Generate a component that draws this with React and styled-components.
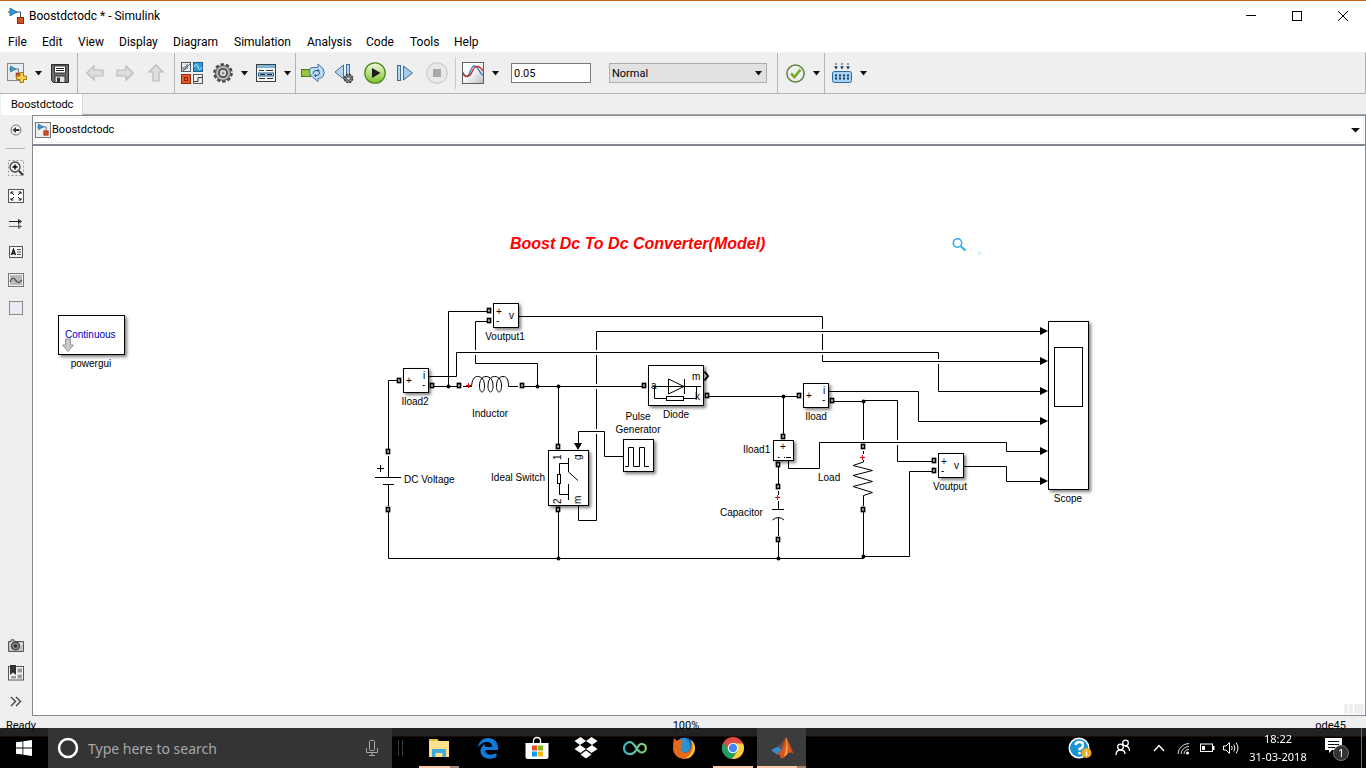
import React from "react";
import styled, { createGlobalStyle, css } from "styled-components";

const windowFont = `Roboto, "Noto Sans", sans-serif`;
const taskbarFont = `"Noto Sans", "Open Sans", sans-serif`;
const modelFont = `"Liberation Sans", Arial, sans-serif`;

const GlobalStyle = createGlobalStyle`
  * { box-sizing: border-box; }
  body { margin: 0; background: #000; font-family: ${windowFont}; font-size: 12px; color: #000; }
  button, input, select { font: inherit; color: inherit; }
  button { border: 0; padding: 0; background: none; }
  svg { display: block; }
`;

/* ---------- window frame ---------- */

const Desktop = styled.div`
  min-height: 100vh;
  display: flex;
  flex-direction: column;
  padding-bottom: 31px;
`;

const Window = styled.main`
  flex: 1;
  display: flex;
  flex-direction: column;
  background: #efefef;
  border-top: 1px solid #c8601c;
  border-bottom: 1px solid #c8601c;
`;

const TitleBar = styled.header`
  display: flex;
  align-items: center;
  height: 30px;
  padding-left: 8px;
  background: #fff;
`;

const WindowTitle = styled.h1`
  flex: 1;
  margin: 0 0 0 5px;
  font-size: 12px;
  line-height: 16px;
  font-weight: 400;
`;

const CaptionButton = styled.button`
  width: 46px;
  height: 30px;
  display: grid;
  place-items: center;
`;

const MenuBar = styled.nav`
  display: flex;
  gap: 16px;
  height: 21px;
  padding-left: 8px;
  background: #fff;
`;

const MenuButton = styled.button`
  width: ${(p) => p.$w}px;
  line-height: 20px;
  text-align: left;
  white-space: nowrap;
`;

/* ---------- toolbar ---------- */

const Toolbar = styled.div`
  display: flex;
  height: 42px;
  border-top: 1px solid #f2f2f2;
  border-bottom: 1px solid #b4b4b4;
  border-right: 1px solid #b4b4b4;
`;

const ToolGroup = styled.div`
  display: flex;
  align-items: center;
  padding: 0 2px;
  border-right: ${(p) => (p.$last ? "0" : "1px solid #b4b4b4")};
`;

const ToolButton = styled.button`
  width: ${(p) => p.$w || 30}px;
  height: 40px;
  display: grid;
  place-items: center;
`;

const ToolDivider = styled.span`
  width: 1px;
  height: 32px;
  margin: 0 2px;
  background: #cacaca;
`;

const StopTime = styled.input`
  width: 80px;
  height: 20px;
  margin-left: 9px;
  padding: 0 2px;
  border: 1px solid #7a7a7a;
  border-radius: 0;
  background: #fff;
  font-size: 11px;
`;

const ModeBox = styled.div`
  position: relative;
  width: 158px;
  height: 20px;
  margin: 0 8px 0 18px;
  > svg { position: absolute; right: 5px; top: 8px; pointer-events: none; }
`;

const ModeSelect = styled.select`
  appearance: none;
  width: 100%;
  height: 100%;
  padding: 0 2px;
  border: 1px solid #adadad;
  border-radius: 0;
  background: #e1e1e1;
  font-size: 11px;
`;

/* ---------- document area ---------- */

const TabStrip = styled.div`
  display: flex;
  height: 21px;
  padding-left: 1px;
`;

const DocTab = styled.button`
  padding: 0 10px;
  width: 82px;
  background: #fff;
  border-right: 1px solid #d9d9d9;
  font-size: 11px;
  line-height: 20px;
  text-align: left;
`;

const TabRest = styled.div`
  flex: 1;
  border-bottom: 1px solid #a4a6ab;
`;

const Workspace = styled.div`
  flex: 1;
  display: flex;
`;

const Palette = styled.aside`
  width: 32px;
  display: flex;
  flex-direction: column;
  padding: 1px 0;
`;

const PaletteButton = styled.button`
  height: 28px;
  width: 32px;
  display: grid;
  place-items: center;
`;

const PaletteRule = styled.hr`
  width: 19px;
  margin: 4px 6px 5px;
  border: 0;
  border-top: 1px solid #b4b4b4;
`;

const Spacer = styled.div`
  flex: 1;
`;

const Editor = styled.section`
  flex: 1;
  display: flex;
  flex-direction: column;
  border: 1px solid #828790;
  background: #fff;
`;

const PathBar = styled.div`
  height: 30px;
  padding: 1px;
  border-bottom: 2px solid #828790;
`;

const PathInner = styled.div`
  display: flex;
  align-items: center;
  height: 26px;
  padding: 0 3px 0 0;
  border: 1px solid #efefef;
`;

const PathLink = styled.a`
  flex: 1;
  display: flex;
  align-items: center;
  gap: 1px;
  color: #000;
  font-size: 11px;
  line-height: 16px;
  text-decoration: none;
`;

const StatusBar = styled.footer`
  display: grid;
  grid-template-columns: 1fr auto 1fr;
  height: 20px;
  padding-left: 6px;
  font-size: 11px;
  line-height: 20px;
`;

const StatusEnd = styled.span`
  padding-right: 20px;
  text-align: right;
`;

/* ---------- model canvas ---------- */

const ORIGIN_X = 33;
const ORIGIN_Y = 146;

const Canvas = styled.div`
  position: relative;
  flex: 1;
  min-height: 440px;
  overflow: hidden;
  font-family: ${modelFont};
  font-size: 10px;
`;

const place = css`
  position: absolute;
  left: ${(p) => p.$x - ORIGIN_X}px;
  top: ${(p) => p.$y - ORIGIN_Y}px;
`;

const Wiring = styled.svg`
  position: absolute;
  left: 0;
  top: 0;
`;

const Block = styled.div`
  ${place}
  width: ${(p) => p.$w}px;
  height: ${(p) => p.$h}px;
  border: 1px solid #000;
  background: #fff;
  box-shadow: 2px 2px 3px rgba(0, 0, 0, 0.5);
  > svg { margin: -1px; font-family: ${modelFont}; font-size: 10px; }
`;

const Label = styled.span`
  ${place}
  width: 80px;
  margin-left: ${(p) => (p.$align === "left" ? 0 : -40)}px;
  text-align: ${(p) => p.$align || "center"};
  line-height: 13px;
`;

const ModelTitle = styled.h2`
  ${place}
  margin: 0;
  font-size: 16px;
  line-height: 20px;
  font-weight: 700;
  font-style: italic;
  color: #f00;
  white-space: nowrap;
`;

const Ghost = styled.span`
  position: absolute;
  right: 1px;
  bottom: 1px;
  width: 20px;
  height: 10px;
  background: linear-gradient(90deg, #efefef 4px, #fff 4px 5px, #efefef 5px 9px, #fff 9px 10px, #efefef 10px);
`;

/* ---------- taskbar ---------- */

const Taskbar = styled.div`
  position: fixed;
  left: 0;
  right: 0;
  bottom: 0;
  height: 40px;
  display: flex;
  background: rgba(0, 0, 0, 0.86);
  color: #fff;
  font-family: ${taskbarFont};
`;

const TaskButton = styled.button`
  position: relative;
  width: ${(p) => p.$w || 49}px;
  height: 40px;
  display: grid;
  place-items: center;
  background: ${(p) => (p.$active ? "#3c3c3c" : "none")};
  ${(p) =>
    p.$running &&
    css`
      &::after {
        content: "";
        position: absolute;
        left: ${p.$active ? 0 : 5}px;
        right: ${p.$active ? 0 : 4}px;
        bottom: 0;
        height: 2px;
        background: linear-gradient(90deg, #ffc8a8 ${p.$stacked ? "calc(100% - 9px)" : "100%"}, #a18677 0);
      }
    `}
`;

const Search = styled.label`
  display: flex;
  align-items: center;
  width: 344px;
  padding: 0 14px 0 9px;
  background: #343434;
`;

const SearchInput = styled.input`
  flex: 1;
  min-width: 0;
  margin-left: 9px;
  padding: 0;
  border: 0;
  background: none;
  font-size: 14px;
  &::placeholder { color: #a8a8a8; opacity: 1; }
`;

const Grip = styled.span`
  width: 5px;
  height: 16px;
  margin: 12px 11px 0 6px;
  border: solid #3a3a3a;
  border-width: 0 1px;
`;

const Clock = styled.button`
  width: 70px;
  font-size: 11px;
  line-height: 18px;
  text-align: center;
`;

const ShowDesktop = styled.button`
  width: 5px;
  border-left: 1px solid #6a6a6a;
`;

/* ---------- small icons ---------- */

const Svg = ({ w, h, children, ...rest }) => (
  <svg width={w} height={h} viewBox={`0 0 ${w} ${h}`} fill="none" aria-hidden="true" {...rest}>
    {children}
  </svg>
);

const Caret = ({ w = 9 }) => (
  <Svg w={w} h={5}>
    <path d={`M0 0H${w}L${w / 2} 4.500Z`} fill="#111" />
  </Svg>
);

const ModelGlyph = () => (
  <>
    <path d="M0 4H12.500V9" stroke="#33506b" />
    <path d="M2 0L9 4L2 8Z" fill="#2f9bd8" stroke="#1b5f92" strokeWidth="0.8" />
    <rect x="9.5" y="9.5" width="6" height="6" fill="#d94f22" stroke="#8f2c0d" />
  </>
);

const ModelIcon = () => <Svg w={16} h={16}><ModelGlyph /></Svg>;

const ModelDocIcon = () => (
  <Svg w={16} h={16}>
    <rect x="0.5" y="0.5" width="15" height="15" fill="#eee" stroke="#777" />
    <g transform="translate(2 2) scale(0.72)"><ModelGlyph /></g>
  </Svg>
);

const NewIcon = () => (
  <Svg w={20} h={20}>
    <rect x="0.5" y="0.5" width="16" height="17" fill="#e9eaec" stroke="#888" />
    <g transform="translate(2 3) scale(0.75)"><ModelGlyph /></g>
    <path d="M13 9.500H16.500V13H19.500V16.500H16.500V19.500H13V16.500H9.500V13H13Z" fill="#f7d257" stroke="#a27a14" />
  </Svg>
);

const SaveIcon = () => (
  <Svg w={18} h={19}>
    <path d="M0.500 0.500H17.500V18.500H2.500L0.500 16.500Z" fill="#6d6d70" stroke="#2b2b2d" />
    <rect x="3.500" y="2" width="11" height="7" fill="#fff" stroke="#333" />
    <path d="M5 4.500H13M5 6.500H13" stroke="#222" />
    <rect x="4" y="12" width="10" height="6.500" fill="#e2e2e2" stroke="#333" />
    <rect x="6" y="13.500" width="3" height="5" fill="#333" />
  </Svg>
);

const ArrowIcon = ({ turn = 0 }) => (
  <Svg w={18} h={18}>
    <path
      d="M0.800 9L8 2V6H17V12H8V16Z"
      fill="#dedede"
      stroke="#bababa"
      strokeWidth="1.200"
      transform={`rotate(${turn} 9 9)`}
    />
  </Svg>
);

const LibraryIcon = () => (
  <Svg w={22} h={22}>
    <rect x="0.500" y="0.500" width="9" height="9" fill="#e8ecee" stroke="#53585c" />
    <path d="M2 8V5M4 8V4M6 7V2M2 9L9 2" stroke="#55606a" />
    <rect x="12.500" y="0.500" width="9" height="9" fill="#2c9ad4" stroke="#1a5f91" />
    <path d="M13 5C15 1 16.500 2 17 5S19.500 8 21 5" stroke="#d9f0fc" />
    <rect x="0.500" y="12.500" width="9" height="9" fill="#e35a28" stroke="#8f2d0c" />
    <rect x="3.500" y="15.500" width="3" height="3" stroke="#7f270b" />
    <rect x="12.500" y="12.500" width="9" height="9" fill="#eef0f1" stroke="#53585c" />
    <path d="M13 19.500H17V15.500H21" stroke="#33383c" />
  </Svg>
);

const GearIcon = () => (
  <Svg w={20} h={20}>
    <circle cx="10" cy="10" r="8.600" stroke="#4a4a4a" strokeWidth="2.400" strokeDasharray="3.400 2" />
    <circle cx="10" cy="10" r="7.500" fill="#b1b3b5" stroke="#565656" />
    <circle cx="10" cy="10" r="4" fill="#dedede" stroke="#3f3f3f" strokeWidth="1.600" />
    <circle cx="10" cy="10" r="1.500" fill="#8b8b8b" />
  </Svg>
);

const ExplorerIcon = () => (
  <Svg w={20} h={18}>
    <rect x="0.500" y="0.500" width="19" height="17" fill="#f4f4f4" stroke="#3b3f44" />
    <rect x="1" y="1" width="18" height="3" fill="#7fb4da" />
    <path d="M3 6.500H8M10 6.500H17M3 14.500H9M11 14.500H17" stroke="#333" />
    <rect x="2.500" y="9" width="15" height="3" fill="#b9d7ee" stroke="#2a5f8c" />
    <path d="M4 10.500H9M11 10.500H16" stroke="#123" />
  </Svg>
);

const FastRestartIcon = () => (
  <Svg w={24} h={20}>
    <rect x="0.500" y="6.500" width="9" height="7" fill="#93c83e" stroke="#4f7a1c" />
    <path d="M10 4.500H17V1L22 5.500Q24.500 10 22 13.500Q20 15.500 17 15.500V18.500L12 14.500Q8.500 12 8.500 9Q8.500 6 10 4.500Z" fill="#bcdcf3" stroke="#3c77a8" />
    <path d="M12 11Q12 7.500 15 7.500H18M18.500 8.500Q19 12.500 16 12.500H13.500M16.500 6L18 7.500L16.500 9M15 11L13.500 12.500L15 14" stroke="#2b5f8e" />
  </Svg>
);

const StepBackIcon = () => (
  <Svg w={20} h={21}>
    <path d="M9.500 2V16L1 9Z" fill="#b4d8f1" stroke="#3c6f9c" />
    <rect x="12.500" y="1.500" width="3" height="15" fill="#b4d8f1" stroke="#3c6f9c" />
    <circle cx="14.500" cy="15.500" r="4" fill="#999" stroke="#333" strokeWidth="1.600" strokeDasharray="2.200 0.900" />
    <circle cx="14.500" cy="15.500" r="1.800" fill="#eee" stroke="#333" />
  </Svg>
);

const RunIcon = () => (
  <Svg w={22} h={22}>
    <defs>
      <linearGradient id="run" x1="0" y1="0" x2="0" y2="1">
        <stop offset="0" stopColor="#f4fbe2" />
        <stop offset="1" stopColor="#7cc028" />
      </linearGradient>
    </defs>
    <circle cx="11" cy="11" r="10.200" fill="url(#run)" stroke="#4c8a1b" strokeWidth="1.300" />
    <path d="M8 6V16L16.500 11Z" fill="#1c1c1c" />
  </Svg>
);

const StepForwardIcon = () => (
  <Svg w={17} h={18}>
    <rect x="0.500" y="1.500" width="3" height="15" fill="#b4d8f1" stroke="#3c6f9c" />
    <path d="M6.500 2V16L15.500 9Z" fill="#a3cdea" stroke="#3c6f9c" />
  </Svg>
);

const StopIcon = () => (
  <Svg w={22} h={22}>
    <circle cx="11" cy="11" r="10.300" fill="#e9e9e9" stroke="#c3c3c3" />
    <rect x="7" y="7" width="8" height="8" fill="#a9a9a9" />
  </Svg>
);

const ScopeIcon = () => (
  <Svg w={22} h={22}>
    <defs>
      <linearGradient id="scope" x1="0" y1="0" x2="1" y2="1">
        <stop offset="0.400" stopColor="#fff" />
        <stop offset="1" stopColor="#b9bcc0" />
      </linearGradient>
    </defs>
    <rect x="0.500" y="0.500" width="21" height="21" fill="url(#scope)" stroke="#5c5f63" />
    <path d="M1 10C2 15 6 16 8 10S12 3 14.500 5S18 12 21 13" stroke="#3b7fc0" strokeWidth="1.400" />
    <path d="M1 12C4 16 8 15 10 10S16 1 21 9" stroke="#c7312c" strokeWidth="1.400" />
  </Svg>
);

const CheckIcon = () => (
  <Svg w={19} h={19}>
    <circle cx="9.500" cy="9.500" r="8.600" fill="#eef0ea" stroke="#5f7f3c" strokeWidth="1.500" />
    <path d="M5 9.500L8.500 13L14.500 5.500" stroke="#73ac2b" strokeWidth="2.600" />
  </Svg>
);

const BuildIcon = () => (
  <Svg w={20} h={20}>
    <path d="M4 0V4M10 0V4M16 0V4" stroke="#1d4670" strokeDasharray="2 1" />
    <path d="M2 3.500H6L4 6.500ZM8 3.500H12L10 6.500ZM14 3.500H18L16 6.500Z" fill="#1d4670" />
    <rect x="0.500" y="8.500" width="19" height="11" rx="2" fill="#a8d3f2" stroke="#2a68a0" />
    <path d="M3 12.500H17M3 15.500H17" stroke="#153c66" strokeWidth="2" strokeDasharray="2 2" />
  </Svg>
);

/* ---------- palette icons ---------- */

const paletteTop = [
  ["Zoom", <Svg w={18} h={18} key="z">
    <rect x="1.500" y="1.500" width="15" height="15" stroke="#999" strokeDasharray="2 2" />
    <circle cx="8" cy="8" r="5" fill="#f3f3f3" stroke="#444" strokeWidth="1.300" />
    <path d="M5.500 8H10.500M8 5.500V10.500" stroke="#000" strokeWidth="1.400" />
    <path d="M12 12L16 16" stroke="#333" strokeWidth="2" />
  </Svg>],
  ["Fit to view", <Svg w={16} h={14} key="f">
    <rect x="0.500" y="0.500" width="15" height="13" fill="#fafafa" stroke="#555" />
    <path d="M3 5V3H5.500M10.500 3H13V5M13 9V11H10.500M5.500 11H3V9M3 3L6 6M13 3L10 6M13 11L10 8M3 11L6 8" stroke="#222" />
  </Svg>],
  ["Sample time", <Svg w={16} h={12} key="s">
    <path d="M1 3.500H13M10.500 1.500L13.500 3.500L10.500 5.500Z" stroke="#222" />
    <path d="M1 8.500H13M10.500 6.500L13.500 8.500L10.500 10.500Z" stroke="#666" />
  </Svg>],
  ["Annotation", <Svg w={14} h={12} key="a">
    <rect x="0.500" y="0.500" width="13" height="11" fill="#fafafa" stroke="#555" />
    <path d="M2.500 9L4.500 3.500L6.500 9M3.500 7.500H6" stroke="#111" strokeWidth="1.300" />
    <path d="M8 3.500H12M8 6H12M8 8.500H12" stroke="#555" />
  </Svg>],
  ["Image", <Svg w={16} h={14} key="i">
    <rect x="0.500" y="0.500" width="15" height="13" fill="#f2f2f2" stroke="#777" />
    <rect x="2" y="2" width="12" height="10" fill="#b9b9b9" />
    <path d="M2 9Q4.500 3 7 6.500T11 9.500L14 7" stroke="#555" strokeWidth="1.300" />
  </Svg>],
  ["Area", <Svg w={14} h={14} key="b">
    <rect x="0.500" y="0.500" width="13" height="13" fill="#e9e9f9" stroke="#8a8a8a" />
  </Svg>],
];

const paletteBottom = [
  ["Screenshot", <Svg w={16} h={13} key="c">
    <path d="M0.500 2.500H3V0.800H6V2.500H15.500V12.500H0.500Z" fill="#c2c2c2" stroke="#555" />
    <circle cx="7.500" cy="7" r="4" fill="#888" stroke="#333" />
    <circle cx="7.500" cy="7" r="1.800" fill="#333" />
    <rect x="12.500" y="4" width="2" height="2" fill="#eee" />
  </Svg>],
  ["Model browser", <Svg w={16} h={16} key="m">
    <rect x="0.500" y="1.500" width="15" height="13.500" fill="#f4f4f4" stroke="#555" />
    <path d="M2 0H8V10L5 7.500L2 10Z" fill="#333" />
    <path d="M9.500 3.500H14V7.500H9.500ZM9.500 9.500H14V13.500H9.500ZM3 11H8V13.500H3Z" fill="#999" />
  </Svg>],
  ["More", <Svg w={12} h={11} key="x">
    <path d="M1 1L5.500 5.500L1 10M6 1L10.500 5.500L6 10" stroke="#444" strokeWidth="1.400" />
  </Svg>],
];

const menus = [
  ["File", 18], ["Edit", 20], ["View", 25], ["Display", 38], ["Diagram", 45],
  ["Simulation", 57], ["Analysis", 43], ["Code", 28], ["Tools", 28], ["Help", 25],
];

/* ---------- model data ---------- */

const wires = [
  "M487 311.500H448.500V386",
  "M487 321.500H475.500V350M475.500 355V363.500H537.500V386",
  "M429 376.500H456.500V352.500H938.500V359M938.500 364V391.500H1041",
  "M397 380.500H388.500V449",
  "M388.500 511V558.500H863.500V512",
  "M434 386.500H457M524 386.500H642",
  "M558.500 386V444M558.500 512V558",
  "M578.500 444V431.500H604.500V456.500H623",
  "M578.500 506V520.500H596.500V434M596.500 429V389M596.500 384V355M596.500 350V331.500H1041",
  "M519 316.500H822.500V329M822.500 334V350M822.500 355V361.500H1041",
  "M709 396.500H797M783.500 396V434",
  "M778.500 467V484M778.500 542V558",
  "M788.500 461V468.500H819.500V442.500H1006.500V451.500H1041",
  "M829 391.500H918.500V421.500H1041",
  "M834 401.500H863.500V440M863.500 400.500H897.500V440M897.500 445V461.500H932",
  "M863.500 556.500H909.500V471.500H932",
  "M964 466.500H1006.500V481.500H1041",
];

const components = [
  /* battery */
  "M388.500 456V477.500M375 477.500H401M383 484.500H394M388.500 484.500V506M377 468.500H384M380.500 465V472",
  /* inductor */
  "M463 386.500H471.500C472 380 474 376.500 477.500 376.500C482 376.500 484.500 380 484.500 386C484.500 394 479.500 394 479.500 386C479.500 380 482 376.500 486 376.500C490.500 376.500 493 380 493 386C493 394 488 394 488 386C488 380 490.500 376.500 494.500 376.500C499 376.500 501.500 380 501.500 386C501.500 394 496.500 394 496.500 386C496.500 380 499 376.500 503 376.500C507 376.500 508.500 380 508.500 386.500H518",
  /* capacitor */
  "M778.500 491V495M778.500 501V509.500M772 509.500H784M772.500 520Q778.500 515 784 520M778.500 517.500V536",
  /* resistor */
  "M863.500 451V454M863.500 460V462L853 465.500L872.500 470.500L853 475.500L872.500 481.500L853 486.500L872.500 492.500L863.500 495.500V506",
];

const ports = [
  [489, 311], [489, 321], [399, 381], [432, 386], [459, 386], [522, 386], [388, 452], [388, 510],
  [558, 447], [558, 510], [644, 386], [707, 396], [799, 396], [832, 401], [783, 437], [778, 465],
  [778, 487], [778, 540], [863, 447], [863, 510], [934, 461], [934, 471],
];

const junctions = [
  [448.5, 386.5], [537.5, 386.5], [558.5, 386.5], [558.5, 558.5], [783.5, 396.5],
  [778.5, 558.5], [863.5, 401.5], [863.5, 556.5],
];

const polarity = [[469, 386], [778, 498], [863, 458]];
const scopeInputs = [331, 361, 391, 421, 451, 481];

const labels = [
  ["powergui", 91, 357], ["Voutput1", 505, 330], ["Iload2", 415, 395], ["Inductor", 490, 407],
  ["DC Voltage", 404, 473, "left"], ["Ideal Switch", 505, 471, "right"], ["Diode", 676, 408],
  ["Pulse Generator", 638, 410], ["Iload", 816, 410], ["Iload1", 743, 443, "left"],
  ["Capacitor", 720, 506, "left"], ["Load", 818, 471, "left"], ["Voutput", 950, 480], ["Scope", 1068, 492],
];

const CurrentMeter = ({ x, y }) => (
  <Block $x={x} $y={y} $w={26} $h={25}>
    <Svg w={26} h={25}>
      <g fill="#000"><text x="3" y="16">+</text><text x="20" y="11">i</text><text x="19" y="20">-</text></g>
    </Svg>
  </Block>
);

const VoltMeter = ({ x, y }) => (
  <Block $x={x} $y={y} $w={26} $h={25}>
    <Svg w={26} h={25}>
      <g fill="#000"><text x="3" y="12">+</text><text x="3" y="21">-</text><text x="16" y="16">v</text></g>
    </Svg>
  </Block>
);

const Model = () => (
  <Canvas>
    <ModelTitle $x={510} $y={234}>Boost Dc To Dc Converter(Model)</ModelTitle>

    <Block $x={58} $y={315} $w={67} $h={40}>
      <Svg w={67} h={40}>
        <path d="M7.500 24H12.500V30H15.500L10 36.500L4.500 30H7.500Z" fill="#c9c9c9" stroke="#999" />
        <text x="7" y="23" fill="#0000c0">Continuous</text>
      </Svg>
    </Block>
    <VoltMeter x={493} y={303} />
    <CurrentMeter x={403} y={368} />
    <Block $x={548} $y={450} $w={41} $h={56}>
      <Svg w={41} h={56}>
        <path d="M11.500 24V13.500H20.500M20.500 8V22L30 30.500M11.500 34V44.500H20.500M20.500 34V50" stroke="#000" />
        <rect x="9.500" y="24.500" width="3" height="9" stroke="#000" />
        <g fill="#000">
          <text transform="translate(13 10) rotate(-90)">1</text>
          <text transform="translate(33 10) rotate(-90)">g</text>
          <text transform="translate(13 54) rotate(-90)">2</text>
          <text transform="translate(33 54) rotate(-90)">m</text>
        </g>
      </Svg>
    </Block>
    <Block $x={648} $y={365} $w={56} $h={41}>
      <Svg w={56} h={41}>
        <path d="M5 21.500H53M20.500 14V29L36 21.500ZM36.500 14V29M6.500 21.500V33.500H18M36 33.500H48.500V22" stroke="#000" />
        <rect x="18.500" y="31.500" width="17" height="4" stroke="#000" />
        <g fill="#000"><text x="44" y="15">m</text><text x="47" y="35">k</text><text x="3" y="24">a</text></g>
      </Svg>
    </Block>
    <Block $x={623} $y={439} $w={31} $h={33}>
      <Svg w={31} h={33}>
        <path d="M2 27.500H5.500V8.500H10.500V27.500H16.500V8.500H21.500V27.500H26" stroke="#000" />
      </Svg>
    </Block>
    <CurrentMeter x={803} y={383} />
    <Block $x={773} $y={440} $w={21} $h={21}>
      <Svg w={21} h={21}>
        <text x="7" y="10" fill="#000">+</text>
        <path d="M5 17.500H6.500M11 17.500H12M13 17.500H18" stroke="#000" />
      </Svg>
    </Block>
    <VoltMeter x={938} y={453} />
    <Block $x={1048} $y={321} $w={41} $h={169}>
      <Svg w={41} h={169}>
        <rect x="6.500" y="26.500" width="28" height="59" stroke="#000" />
      </Svg>
    </Block>

    <Wiring width="1100" height="440" viewBox={`${ORIGIN_X} ${ORIGIN_Y} 1100 440`} fill="none" aria-hidden="true">
      {wires.map((d) => <path key={d} d={d} stroke="#000" />)}
      {components.map((d) => <path key={d} d={d} stroke="#000" />)}
      {ports.map(([x, y]) => (
        <rect key={`${x}-${y}`} x={x - 1.5} y={y - 2.5} width="3" height="4" fill="#fff" stroke="#000" strokeWidth="1.700" />
      ))}
      {junctions.map(([x, y]) => <circle key={`${x}-${y}`} cx={x} cy={y} r="2" fill="#000" />)}
      {polarity.map(([x, y]) => (
        <path key={`${x}-${y}`} d={`M${x - 3} ${y - 0.5}h5M${x - 0.5} ${y - 3}v5`} stroke="#e00" />
      ))}
      {scopeInputs.map((y) => <path key={y} d={`M1040 ${y - 4}L1048 ${y}L1040 ${y + 4}Z`} fill="#000" />)}
      <path d="M574 443H582L578 450Z" fill="#000" />
      <path d="M704.500 371.500L708 376L704.500 380.500" stroke="#000" strokeWidth="2" />
      <circle cx="957.500" cy="243" r="4.200" stroke="#25aeea" strokeWidth="1.500" />
      <path d="M961 246.500L965.500 250.500" stroke="#25aeea" strokeWidth="2" />
      <rect x="978" y="252" width="3" height="3" fill="#d5edfb" />
    </Wiring>

    {labels.map(([text, x, y, align]) => (
      <Label key={text} $x={x} $y={y} $align={align}>
        {text === "Pulse Generator" ? <>Pulse<br />Generator</> : text}
      </Label>
    ))}
    <Ghost />
  </Canvas>
);

/* ---------- taskbar icons ---------- */

const apps = [
  ["File Explorer", { $running: true, $stacked: true }, <Svg w={22} h={20} key="e">
    <path d="M1 1H9L11 3H21V19H1Z" fill="#fde08a" />
    <path d="M1 1H9L10 3H1Z" fill="#e8b84a" />
    <path d="M4 19V11H18V19H14.500V15H7.500V19Z" fill="#3fa9e0" />
  </Svg>],
  ["Edge", {}, <Svg w={22} h={22} key="g">
    <path d="M1 10.500C2 4 6 1 11 1C17 1 21 5 21 10.500V13H8C8.500 18 14 19 19.500 16V20C12 24 3 21 3.500 13.500C3.800 10 6 8 9 7C8 8 7.800 9 7.800 10H15C15 6.500 13 5 10 5C6.500 5 3 7 1 10.500Z" fill="#0f7ad8" />
  </Svg>],
  ["Store", {}, <Svg w={24} h={24} key="s">
    <path d="M8.500 7V5Q8.500 1.500 12 1.500T15.500 5V7" stroke="#fff" strokeWidth="1.300" />
    <path d="M0.500 7H23.500V21Q23.500 23 21.500 23H2.500Q0.500 23 0.500 21Z" fill="#fff" />
    <path d="M7 9.500H12V14.500H7Z" fill="#e84e1f" /><path d="M13 9.500H18V14.500H13Z" fill="#80b81a" />
    <path d="M7 15.500H12V20.500H7Z" fill="#0a9fe8" /><path d="M13 15.500H18V20.500H13Z" fill="#fbb70d" />
  </Svg>],
  ["Dropbox", {}, <Svg w={24} h={24} key="d">
    <path d="M6.500 1L12 5L6 9L0.500 5ZM17.500 1L23.500 5L18 9L12 5ZM6 9L12 13L6.500 17L0.500 13ZM18 9L23.500 13L17.500 17L12 13ZM6.500 18.500L12 14.500L17.500 18.500L12 22.500Z" fill="#fff" />
  </Svg>],
  ["Infinity", {}, <Svg w={24} h={16} key="i">
    <defs><linearGradient id="inf"><stop offset="0" stopColor="#37b5c6" /><stop offset="1" stopColor="#8fcf72" /></linearGradient></defs>
    <path d="M13.500 9.500C11 14 9 14.200 7 14.200A6 6 0 0 1 7 2.200C12 2.200 14 12.500 18.500 12.500A4.300 4.300 0 0 0 18.500 3.800C16 3.800 15 6 13.500 9.500" stroke="url(#inf)" strokeWidth="2.200" />
  </Svg>],
  ["Firefox", {}, <Svg w={24} h={24} key="f">
    <circle cx="12.500" cy="12" r="10.500" fill="#1c63ab" />
    <path d="M8 3Q14 0 17 6Q20 13 15 16Q11 18 8 14Q6 10 9 8" fill="#2f92cf" />
    <path d="M2 2L5 5Q8 3 11 5L8.500 8.500L10 11Q8 11.500 8.500 14Q11 18 16 16Q21 12 19 4Q23.500 8 23 13.500Q21 23 12 23Q2 22 1 13Q1 7 2 2Z" fill="#e9691c" />
    <path d="M19 4Q23.500 8 23 13.500Q21 22 13 22.500Q20 18 20.500 12Q20.500 7 19 4Z" fill="#f8c22f" />
  </Svg>],
  ["Chrome", { $running: true }, <Svg w={24} h={24} key="c">
    <circle cx="12" cy="12" r="11" fill="#dc4b3e" />
    <path d="M2.500 6.500A11 11 0 0 0 11 23L17 14.500H7.500Z" fill="#19a15f" />
    <path d="M22 7.500H12L17 14.500L11 23A11 11 0 0 0 22 7.500Z" fill="#ffcd40" />
    <circle cx="12" cy="12" r="5.300" fill="#fff" /><circle cx="12" cy="12" r="4.200" fill="#4788f4" />
  </Svg>],
  ["MATLAB", { $running: true, $active: true, $stacked: true }, <Svg w={24} h={22} key="m">
    <path d="M1 13L8 9.500L12 12.500L7 17.500Z" fill="#3c8cc4" />
    <path d="M8 9.500Q11 8 13 4L16 0L12 12.500Z" fill="#7a4a48" />
    <path d="M16 0Q19 5 23.500 17Q20 14 17 17.500Q14 21.500 11 21.500Q10 17 7 17.500L12 12.500Z" fill="#db5420" />
    <path d="M16 0Q17 9 14 20Q15.500 18 17 17.500Q19 9 16 0Z" fill="#f5a13b" />
  </Svg>],
];

const tray = [
  ["Help", 38, <Svg w={24} h={24} key="h">
    <circle cx="11" cy="12" r="10.500" fill="#fff" /><circle cx="11" cy="12" r="9" fill="#1795d2" />
    <path d="M7.500 9Q8 6 11.500 6Q15 6 15 9T11.500 13V14.500M11.500 16V18.500" stroke="#fff" strokeWidth="2.400" />
    <circle cx="18.500" cy="17" r="5" fill="#f0ac21" /><path d="M18.500 14V15M18.500 16V20" stroke="#fff" strokeWidth="1.500" />
  </Svg>],
  ["People", 48, <Svg w={16} h={18} key="p">
    <circle cx="5.500" cy="8" r="2.800" stroke="#fff" strokeWidth="1.300" />
    <path d="M1 16Q1 11 5.500 11T10 15" stroke="#fff" strokeWidth="1.300" />
    <circle cx="10.500" cy="4" r="2.800" stroke="#fff" strokeWidth="1.300" />
    <path d="M10 7Q14.500 7 14.500 12" stroke="#fff" strokeWidth="1.300" />
  </Svg>],
  ["Hidden icons", 24, <Svg w={12} h={8} key="u"><path d="M1 7L6 1.500L11 7" stroke="#fff" strokeWidth="1.400" /></Svg>],
  ["Network", 24, <Svg w={14} h={14} key="n">
    <path d="M2 13A11 11 0 0 1 13 2.500M5 13A8 8 0 0 1 13 5.500M8 13A5 5 0 0 1 13 8.500" stroke="#ddd" />
    <circle cx="11.500" cy="12" r="1.500" fill="#fff" />
  </Svg>],
  ["Battery", 24, <Svg w={15} h={10} key="b">
    <rect x="0.500" y="1" width="12" height="7.500" stroke="#fff" /><path d="M13 3H14.500V7H13Z" fill="#fff" />
    <rect x="2" y="3" width="3" height="4" fill="#fff" />
  </Svg>],
  ["Volume", 24, <Svg w={17} h={14} key="v">
    <path d="M0.500 5H3L6.500 1.500V12.500L3 9H0.500Z" stroke="#fff" />
    <path d="M8.500 5Q10 7 8.500 9M10.800 3.500Q13 7 10.800 10.500M13 1.500Q17 7 13 12.500" stroke="#fff" />
  </Svg>],
];

export default function App() {
  return (
    <Desktop>
      <GlobalStyle />
      <Window>
        <TitleBar>
          <ModelIcon />
          <WindowTitle>Boostdctodc * - Simulink</WindowTitle>
          <CaptionButton aria-label="Minimize"><Svg w={10} h={10}><path d="M0 4.500H10" stroke="#000" /></Svg></CaptionButton>
          <CaptionButton aria-label="Maximize"><Svg w={10} h={10}><rect x="0.500" y="0.500" width="9" height="9" stroke="#000" /></Svg></CaptionButton>
          <CaptionButton aria-label="Close"><Svg w={10} h={10}><path d="M0 0L10 10M10 0L0 10" stroke="#000" /></Svg></CaptionButton>
        </TitleBar>

        <MenuBar>
          {menus.map(([name, w]) => <MenuButton key={name} $w={w}>{name}</MenuButton>)}
        </MenuBar>

        <Toolbar>
          <ToolGroup>
            <ToolButton aria-label="New"><NewIcon /></ToolButton>
            <ToolButton $w={12} aria-label="New options"><Caret w={7} /></ToolButton>
            <ToolButton $w={31} aria-label="Save"><SaveIcon /></ToolButton>
          </ToolGroup>
          <ToolGroup>
            <ToolButton aria-label="Back"><ArrowIcon /></ToolButton>
            <ToolButton aria-label="Forward"><ArrowIcon turn={180} /></ToolButton>
            <ToolButton $w={32} aria-label="Up"><ArrowIcon turn={90} /></ToolButton>
          </ToolGroup>
          <ToolGroup>
            <ToolButton aria-label="Library browser"><LibraryIcon /></ToolButton>
            <ToolButton $w={31} aria-label="Model configuration"><GearIcon /></ToolButton>
            <ToolButton $w={12} aria-label="Configuration options"><Caret w={7} /></ToolButton>
            <ToolButton $w={31} aria-label="Model explorer"><ExplorerIcon /></ToolButton>
            <ToolButton $w={12} aria-label="Explorer options"><Caret w={7} /></ToolButton>
          </ToolGroup>
          <ToolGroup>
            <ToolButton aria-label="Fast restart"><FastRestartIcon /></ToolButton>
            <ToolButton $w={31} aria-label="Step back"><StepBackIcon /></ToolButton>
            <ToolButton $w={31} aria-label="Run"><RunIcon /></ToolButton>
            <ToolButton $w={31} aria-label="Step forward"><StepForwardIcon /></ToolButton>
            <ToolButton $w={32} aria-label="Stop"><StopIcon /></ToolButton>
            <ToolDivider />
            <ToolButton aria-label="Data inspector"><ScopeIcon /></ToolButton>
            <ToolButton $w={14} aria-label="Inspector options"><Caret w={7} /></ToolButton>
            <StopTime aria-label="Simulation stop time" defaultValue="0.05" />
            <ModeBox>
              <ModeSelect aria-label="Simulation mode" defaultValue="Normal"><option>Normal</option></ModeSelect>
              <Caret w={7} />
            </ModeBox>
          </ToolGroup>
          <ToolGroup>
            <ToolButton aria-label="Model advisor"><CheckIcon /></ToolButton>
            <ToolButton $w={12} aria-label="Advisor options"><Caret w={7} /></ToolButton>
          </ToolGroup>
          <ToolGroup $last>
            <ToolButton aria-label="Build model"><BuildIcon /></ToolButton>
            <ToolButton $w={12} aria-label="Build options"><Caret w={7} /></ToolButton>
          </ToolGroup>
        </Toolbar>

        <TabStrip>
          <DocTab>Boostdctodc</DocTab>
          <TabRest />
        </TabStrip>

        <Workspace>
          <Palette>
            <PaletteButton aria-label="Hide browser">
              <Svg w={12} h={12}>
                <circle cx="6" cy="6" r="5" fill="#f6f6f6" stroke="#777" />
                <path d="M9.500 5H6V3L2.500 6L6 9V7H9.500Z" fill="#333" />
              </Svg>
            </PaletteButton>
            <PaletteRule />
            {paletteTop.map(([name, icon]) => <PaletteButton key={name} aria-label={name}>{icon}</PaletteButton>)}
            <Spacer />
            {paletteBottom.map(([name, icon]) => <PaletteButton key={name} aria-label={name}>{icon}</PaletteButton>)}
          </Palette>
          <Editor>
            <PathBar>
              <PathInner>
                <PathLink href="#model"><ModelDocIcon />Boostdctodc</PathLink>
                <button aria-label="Path history"><Caret /></button>
              </PathInner>
            </PathBar>
            <Model />
          </Editor>
        </Workspace>

        <StatusBar>
          <span>Ready</span>
          <span>100%</span>
          <StatusEnd>ode45</StatusEnd>
        </StatusBar>
      </Window>

      <Taskbar>
        <TaskButton $w={48} aria-label="Start">
          <Svg w={16} h={16}>
            <path d="M0 2.300L6.500 1.400V7.600H0ZM7.300 1.300L16 0V7.600H7.300ZM0 8.400H6.500V14.600L0 13.700ZM7.300 8.400H16V16L7.300 14.700Z" fill="#fff" />
          </Svg>
        </TaskButton>
        <Search>
          <Svg w={22} h={22}><circle cx="11" cy="11" r="9" stroke="#fff" strokeWidth="2.500" /></Svg>
          <SearchInput aria-label="Search" placeholder="Type here to search" />
          <Svg w={12} h={18}>
            <rect x="3.500" y="1.500" width="5" height="10" rx="1" stroke="#aaa" />
            <path d="M0.500 9V13.500H11.500V9M6 14V16.500M3 16.500H9" stroke="#aaa" />
          </Svg>
        </Search>
        <Grip />
        {apps.map(([name, state, icon]) => <TaskButton key={name} aria-label={name} {...state}>{icon}</TaskButton>)}
        <Spacer />
        {tray.map(([name, w, icon]) => <TaskButton key={name} $w={w} aria-label={name}>{icon}</TaskButton>)}
        <Clock>18:22<br />31-03-2018</Clock>
        <TaskButton $w={48} aria-label="Notifications, 1 new">
          <Svg w={26} h={26}>
            <path d="M1 3H18V15H8L5 18V15H1Z" fill="#fff" />
            <path d="M4 6.500H15M4 9.500H15M4 12.500H11" stroke="#111" />
            <circle cx="17" cy="18" r="7.500" fill="#333" stroke="#777" />
            <text x="14" y="22" fill="#fff" fontSize="11">1</text>
          </Svg>
        </TaskButton>
        <ShowDesktop aria-label="Show desktop" />
      </Taskbar>
    </Desktop>
  );
}
